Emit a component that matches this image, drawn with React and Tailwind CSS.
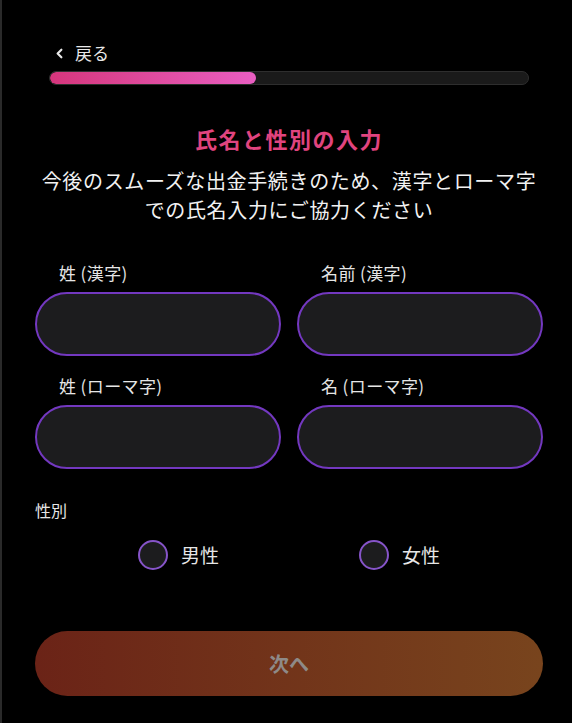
import React, { useState } from 'react';
import { ChevronLeft } from 'lucide-react';

const font = { fontFamily: '"Noto Sans CJK JP", "Noto Sans", sans-serif' };

function Field({ label }) {
  return (
    <div className="flex flex-col">
      <label className="pl-[24px] text-[17px] leading-[24px] tracking-[0.4px] text-[#e6e6e6] mb-[7px]">{label}</label>
      <input
        type="text"
        className="h-[64px] w-full rounded-full border-2 border-[#7338c0] bg-[#1c1c1e] px-6 text-white outline-none"
      />
    </div>
  );
}

function Radio({ label, checked, onClick }) {
  return (
    <button onClick={onClick} className="flex items-center gap-[13px]">
      <span className="w-[30px] h-[30px] rounded-full border-2 border-[#8654c9] bg-[#1c1c1e] flex items-center justify-center">
        {checked && <span className="w-[14px] h-[14px] rounded-full bg-[#8654c9]" />}
      </span>
      <span className="text-[19px] leading-[28px] text-[#e6e6e6]">{label}</span>
    </button>
  );
}

export default function App() {
  const [gender, setGender] = useState(null);

  return (
    <div className="min-h-[723px] w-full bg-black border-l-2 border-[#2a2a2a]" style={font}>
      <div className="pt-[43px] pl-[47px] pr-[43px]">
        <button className="flex items-center gap-[8px] pl-[3px] h-[20px] text-[#e8e8e8]">
          <ChevronLeft className="w-[15px] h-[15px]" strokeWidth={3.5} />
          <span className="text-[17px] leading-[20px]">戻る</span>
        </button>
        <div className="mt-[8px] h-[14px] rounded-full bg-[#1a1a1a] border border-[#2e2e2e] overflow-hidden">
          <div className="h-full w-[43%] rounded-full bg-gradient-to-r from-[#d5357c] to-[#e95ec2]" />
        </div>
      </div>

      <div className="pl-[33px] pr-[29px]">
        <h1 className="mt-[37px] text-center text-[22px] leading-[32px] tracking-[1.5px] font-bold text-[#e0447f]">
          氏名と性別の入力
        </h1>
        <p className="mt-[12px] text-center text-[20px] leading-[29px] tracking-[0.65px] text-[#f2f2f2]">
          今後のスムーズな出金手続きのため、漢字とローマ字
          <br />
          での氏名入力にご協力ください
        </p>

        <div className="mt-[37px] grid grid-cols-2 gap-x-4 gap-y-[18px]">
          <Field label="姓 (漢字)" />
          <Field label="名前 (漢字)" />
          <Field label="姓 (ローマ字)" />
          <Field label="名 (ローマ字)" />
        </div>

        <div className="mt-[29px] text-[16px] leading-[24px] text-[#e6e6e6]">性別</div>
        <div className="mt-[18px] flex justify-center gap-[140px]">
          <Radio label="男性" checked={gender === 'm'} onClick={() => setGender('m')} />
          <Radio label="女性" checked={gender === 'f'} onClick={() => setGender('f')} />
        </div>

        <button className="mt-[61px] w-full h-[65px] rounded-full bg-gradient-to-r from-[#6b2317] to-[#78441d] text-[20px] font-bold text-[#8e8a88]">
          次へ
        </button>
      </div>
    </div>
  );
}
